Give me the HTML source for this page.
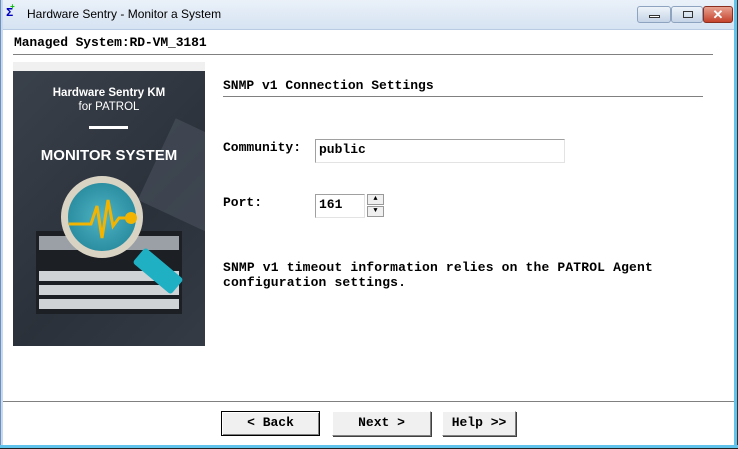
<!DOCTYPE html>
<html><head><style>
*{margin:0;padding:0;box-sizing:border-box}
body{width:738px;height:449px;overflow:hidden;background:#fff;position:relative;font-family:"Liberation Mono",monospace;font-weight:bold;font-size:13px;color:#000}
.abs{position:absolute}
#title{left:0;top:0;width:738px;height:30px;background:linear-gradient(#eaf1f9,#d6e3f2);border-bottom:1px solid #b9cbe2}
#frameL{left:0;top:0;width:3px;height:449px;background:#c9daee;border-left:1px solid #6d8fbf}
#frameR{left:734px;top:0;width:4px;height:449px;background:#5fc3ec;border-right:1px solid #333}
#frameB{left:0;top:445px;width:738px;height:4px;background:#5fc3ec;border-bottom:1px solid #222}
.tb{position:absolute;top:6px;height:17px;border:1px solid #8ea3bf;border-radius:3px;background:linear-gradient(#eef3f9,#c5d4e7)}
.line{position:absolute;height:1px;background:#808080}
.btn{position:absolute;top:411px;height:25px;background:#f0f0f0;border:1px solid #fff;border-right-color:#808080;border-bottom-color:#808080;box-shadow:1px 1px 0 #404040;text-align:center;line-height:22px}
</style></head><body>
<div id="title" class="abs">
 <div class="abs" style="left:6px;top:7px;font-size:12px;line-height:12px;color:#0000c0">Σ</div>
 <div class="abs" style="left:10px;top:3px;width:4px;height:4px;color:#0b0;font-size:8px">+</div>
 <div class="abs" style="left:27px;top:7px;font-family:'Liberation Sans',sans-serif;font-weight:normal;font-size:12px">Hardware Sentry - Monitor a System</div>
 <div class="tb" style="left:637px;width:34px"><div class="abs" style="left:11px;top:8px;width:11px;height:3px;border:1px solid #333;background:#fff"></div></div>
 <div class="tb" style="left:671px;width:32px"><div class="abs" style="left:11px;top:4px;width:10px;height:7px;border:1px solid #333"></div></div>
 <div class="tb" style="left:703px;width:30px;background:linear-gradient(#e8a190,#c4422c);border-color:#8a2e20;color:#fff;text-align:center;line-height:15px;font-family:'Liberation Sans',sans-serif;font-size:13px">✕</div>
</div>
<div id="frameL" class="abs"></div>
<div class="abs" style="left:14px;top:35px;letter-spacing:-0.1px">Managed System:RD-VM_3181</div>
<div class="line" style="left:13px;top:54px;width:700px"></div>
<div class="abs" style="left:13px;top:62px;width:192px;height:9px;background:#f0f0f0"></div>
<div class="abs" style="left:13px;top:71px;width:192px;height:275px;background:linear-gradient(135deg,#3a414b,#2b313a 60%,#343b45);overflow:hidden">
 <div class="abs" style="left:140px;top:60px;width:80px;height:90px;background:#4a525d;transform:rotate(25deg);opacity:.6"></div>
 <div class="abs" style="left:0;top:15px;width:192px;text-align:center;font-family:'Liberation Sans',sans-serif;font-size:11.5px;color:#fff;line-height:14px">Hardware Sentry KM<br><span style="font-weight:normal">for PATROL</span></div>
 <div class="abs" style="left:76px;top:55px;width:39px;height:3px;background:#fff"></div>
 <div class="abs" style="left:0;top:76px;width:192px;text-align:center;font-family:'Liberation Sans',sans-serif;font-size:15px;color:#fff">MONITOR SYSTEM</div>
 <div class="abs" style="left:23px;top:160px;width:146px;height:83px;background:#1c1f23"></div>
 <div class="abs" style="left:26px;top:165px;width:140px;height:14px;background:#9aa0a6"></div>
 <div class="abs" style="left:26px;top:200px;width:140px;height:10px;background:#cfd3d6"></div>
 <div class="abs" style="left:26px;top:214px;width:140px;height:10px;background:#cfd3d6"></div>
 <div class="abs" style="left:26px;top:228px;width:140px;height:10px;background:#cfd3d6"></div>
 <div class="abs" style="left:48px;top:105px;width:82px;height:82px;border-radius:50%;border:7px solid #d9d3c4;background:radial-gradient(#4fb4c4,#1d7f93)"></div>
 <div class="abs" style="left:120px;top:190px;width:50px;height:20px;background:#1fb0c4;transform:rotate(40deg);border-radius:3px"></div>
 <svg class="abs" style="left:48px;top:105px" width="82" height="82"><polyline points="8,48 30,48 36,30 41,62 47,24 52,50 58,42 70,42" fill="none" stroke="#f2b400" stroke-width="3"/><circle cx="70" cy="42" r="6" fill="#f2b400"/></svg>
</div>
<div class="abs" style="left:223px;top:78px">SNMP v1 Connection Settings</div>
<div class="line" style="left:223px;top:96px;width:480px"></div>
<div class="abs" style="left:223px;top:140px">Community:</div>
<div class="abs" style="left:315px;top:139px;width:250px;height:24px;border:1px solid #a0a0a0;border-right-color:#e3e3e3;border-bottom-color:#e3e3e3;padding:2px 3px">public</div>
<div class="abs" style="left:223px;top:195px">Port:</div>
<div class="abs" style="left:315px;top:194px;width:50px;height:24px;border:1px solid #a0a0a0;border-right-color:#e3e3e3;border-bottom-color:#e3e3e3;padding:2px 3px">161</div>
<div class="abs" style="left:367px;top:194px;width:17px;height:11px;background:#f0f0f0;border:1px solid #999;font-size:7px;text-align:center;line-height:9px">▲</div>
<div class="abs" style="left:367px;top:206px;width:17px;height:11px;background:#f0f0f0;border:1px solid #999;font-size:7px;text-align:center;line-height:9px">▼</div>
<div class="abs" style="left:223px;top:260px;letter-spacing:0.16px;line-height:15px">SNMP v1 timeout information relies on the PATROL Agent<br>configuration settings.</div>
<div class="line" style="left:3px;top:401px;width:731px"></div>
<div class="btn" style="left:221px;width:99px;border:1px solid #000;box-shadow:inset 1px 1px 0 #fff,inset -1px -1px 0 #808080">&lt; Back</div>
<div class="btn" style="left:332px;width:99px">Next &gt;</div>
<div class="btn" style="left:442px;width:74px">Help &gt;&gt;</div>
<div id="frameR" class="abs"></div>
<div id="frameB" class="abs"></div>
</body></html>
